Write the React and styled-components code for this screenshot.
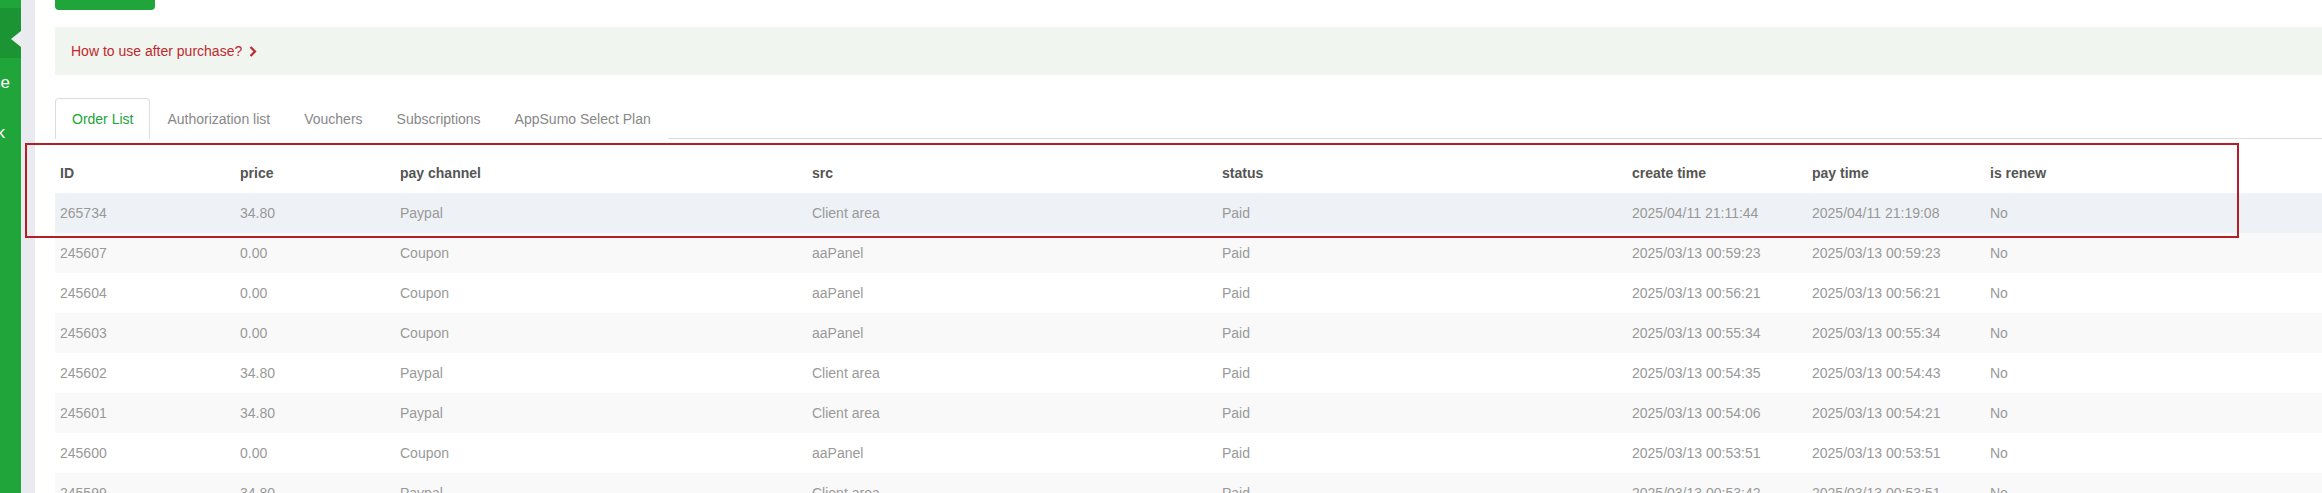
import styled, { createGlobalStyle } from "styled-components";

const GlobalStyle = createGlobalStyle`
  html, body {
    margin: 0;
    padding: 0;
    background: #ffffff;
    font-family: "Liberation Sans", Arial, sans-serif;
  }
`;

const Page = styled.div`
  position: relative;
  width: 2322px;
  height: 493px;
  display: flex;
  overflow: hidden;
  background: #ffffff;
`;

const Sidebar = styled.div`
  width: 21px;
  flex-shrink: 0;
  background: #20a53a;
  padding-top: 8px;
  overflow: hidden;
  display: flex;
  flex-direction: column;
`;

const NavItem = styled.div`
  position: relative;
  flex-shrink: 0;
  height: 50px;
  display: flex;
  align-items: center;
  justify-content: flex-end;
  padding-right: ${p => p.$end}px;
  color: #ffffff;
  font-size: 17px;
  white-space: nowrap;
  background: ${p => (p.$active ? "#1b9433" : "transparent")};
`;

const Notch = styled.span`
  position: absolute;
  right: 0;
  top: 23px;
  width: 0;
  height: 0;
  border-top: 8px solid transparent;
  border-bottom: 8px solid transparent;
  border-right: 10px solid #eceef2;
`;

const Gutter = styled.div`
  width: 14px;
  flex-shrink: 0;
  background: #e9ebf0;
`;

const Main = styled.div`
  flex: 1;
  min-width: 0;
  padding-left: 20px;
  display: flex;
  flex-direction: column;
  & > * {
    flex-shrink: 0;
  }
`;

const BuyButton = styled.div`
  width: 100px;
  height: 36px;
  margin-top: -26px;
  border-radius: 4px;
  background: #20a53a;
  color: #ffffff;
  font-size: 14px;
  display: flex;
  align-items: center;
  justify-content: center;
`;

const Notice = styled.div`
  margin-top: 17px;
  height: 48px;
  background: #f1f5ef;
  display: flex;
  align-items: center;
  gap: 7px;
  padding-left: 16px;
  color: #c0282d;
  font-size: 14px;
`;

const Tabs = styled.div`
  margin-top: 23px;
  height: 40px;
  display: flex;
  border-bottom: 1px solid #dddddd;
`;

const Tab = styled.div`
  height: 41px;
  box-sizing: border-box;
  padding: 0 16px;
  display: flex;
  align-items: center;
  font-size: 14px;
  white-space: nowrap;
  color: ${p => (p.$active ? "#20a53a" : "#888888")};
  background: #ffffff;
  border: 1px solid ${p => (p.$active ? "#dddddd" : "transparent")};
  border-bottom-color: ${p => (p.$active ? "#ffffff" : "transparent")};
  border-radius: 4px 4px 0 0;
  margin-bottom: -1px;
`;

const Table = styled.div`
  margin-top: 14px;
  display: flex;
  flex-direction: column;
`;

const Row = styled.div`
  flex-shrink: 0;
  display: grid;
  grid-template-columns: 180px 160px 412px 410px 410px 180px 178px 1fr;
  height: 40px;
  align-items: center;
  background: ${p => p.$bg};
  font-size: 14px;
  color: ${p => (p.$head ? "#555555" : "#999999")};
  font-weight: ${p => (p.$head ? 700 : 400)};
`;

const Cell = styled.div`
  padding-left: 5px;
  white-space: nowrap;
`;

const Highlight = styled.div`
  position: absolute;
  left: 25px;
  top: 143px;
  width: 2214px;
  height: 95px;
  border: 2px solid #b41f27;
  box-sizing: border-box;
  pointer-events: none;
`;

const head = ["ID", "price", "pay channel", "src", "status", "create time", "pay time", "is renew"];

const orders = [
  ["265734", "34.80", "Paypal", "Client area", "Paid", "2025/04/11 21:11:44", "2025/04/11 21:19:08", "No"],
  ["245607", "0.00", "Coupon", "aaPanel", "Paid", "2025/03/13 00:59:23", "2025/03/13 00:59:23", "No"],
  ["245604", "0.00", "Coupon", "aaPanel", "Paid", "2025/03/13 00:56:21", "2025/03/13 00:56:21", "No"],
  ["245603", "0.00", "Coupon", "aaPanel", "Paid", "2025/03/13 00:55:34", "2025/03/13 00:55:34", "No"],
  ["245602", "34.80", "Paypal", "Client area", "Paid", "2025/03/13 00:54:35", "2025/03/13 00:54:43", "No"],
  ["245601", "34.80", "Paypal", "Client area", "Paid", "2025/03/13 00:54:06", "2025/03/13 00:54:21", "No"],
  ["245600", "0.00", "Coupon", "aaPanel", "Paid", "2025/03/13 00:53:51", "2025/03/13 00:53:51", "No"],
  ["245599", "34.80", "Paypal", "Client area", "Paid", "2025/03/13 00:53:42", "2025/03/13 00:53:51", "No"],
];

const rowBg = i => (i === 0 ? "#eef1f5" : i % 2 ? "#f9f9f9" : "#ffffff");

const Chevron = () => (
  <svg width="8" height="11" viewBox="0 0 8 11">
    <polyline points="1.5,1 6,5.5 1.5,10" fill="none" stroke="#c0282d" strokeWidth="2.2" />
  </svg>
);

export default function App() {
  return (
    <>
      <GlobalStyle />
      <Page>
        <Sidebar>
          <NavItem $active $end={0}>
            <Notch />
          </NavItem>
          <NavItem $end={11}>Invoice</NavItem>
          <NavItem $end={16}>Feedback</NavItem>
        </Sidebar>
        <Gutter />
        <Main>
          <BuyButton>Buy now</BuyButton>
          <Notice>
            How to use after purchase?
            <Chevron />
          </Notice>
          <Tabs>
            <Tab $active>Order List</Tab>
            <Tab>Authorization list</Tab>
            <Tab>Vouchers</Tab>
            <Tab>Subscriptions</Tab>
            <Tab>AppSumo Select Plan</Tab>
          </Tabs>
          <Table>
            <Row $head $bg="#ffffff">
              {head.map(h => (
                <Cell key={h}>{h}</Cell>
              ))}
            </Row>
            {orders.map((o, i) => (
              <Row key={o[0]} $bg={rowBg(i)}>
                {o.map((v, j) => (
                  <Cell key={j}>{v}</Cell>
                ))}
              </Row>
            ))}
          </Table>
        </Main>
        <Highlight />
      </Page>
    </>
  );
}
